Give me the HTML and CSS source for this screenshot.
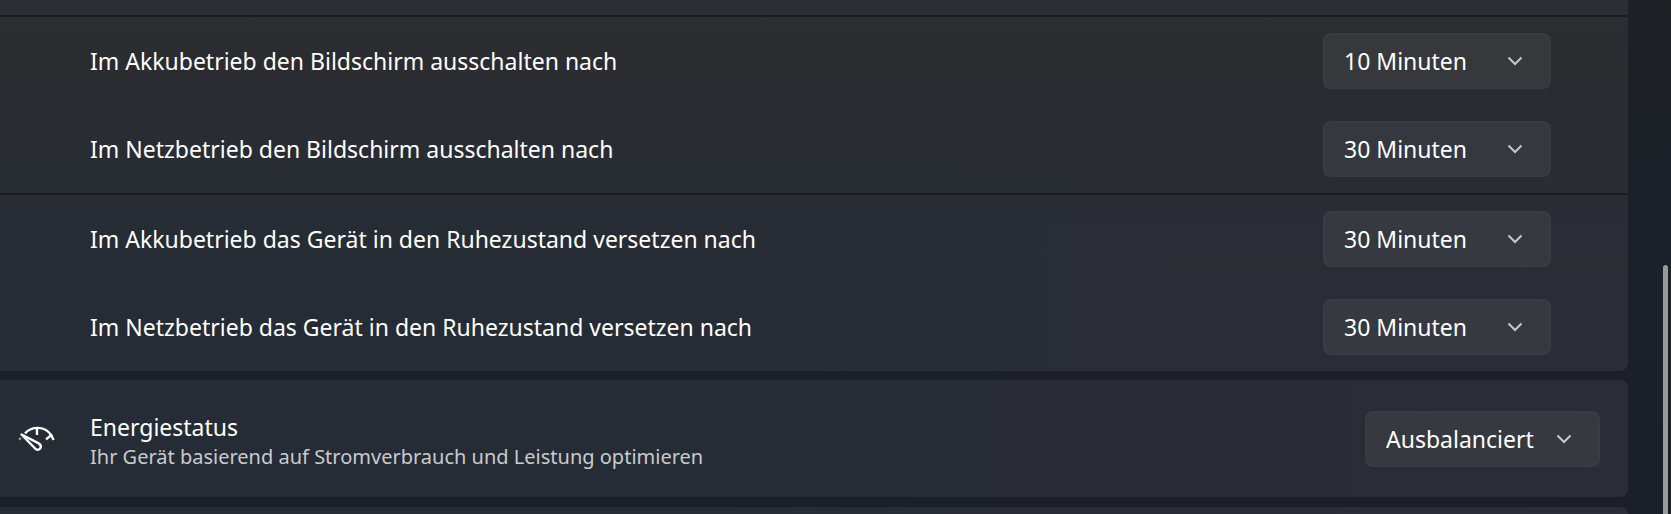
FILE: index.html
```html
<!DOCTYPE html>
<html lang="de">
<head>
    <meta charset="UTF-8">
    <meta name="viewport" content="width=device-width, initial-scale=1.0">
    <title>Netzbetrieb und Energiesparen</title>
    <link rel="stylesheet" href="styles.css">
</head>
<body>
    <main class="settings">
        <section class="card">
            <div class="card-header"></div>
            <div class="group">
                <div class="row">
                    <label for="screenBattery">Im Akkubetrieb den Bildschirm ausschalten nach</label>
                    <div class="dropdown">
                        <select id="screenBattery">
                            <option>10 Minuten</option>
                        </select>
                        <svg class="chevron" viewBox="0 0 16 10"><path d="M1.5 1.5 L8 8 L14.5 1.5"/></svg>
                    </div>
                </div>
                <div class="row">
                    <label for="screenPlugged">Im Netzbetrieb den Bildschirm ausschalten nach</label>
                    <div class="dropdown">
                        <select id="screenPlugged">
                            <option>30 Minuten</option>
                        </select>
                        <svg class="chevron" viewBox="0 0 16 10"><path d="M1.5 1.5 L8 8 L14.5 1.5"/></svg>
                    </div>
                </div>
            </div>
            <div class="group">
                <div class="row">
                    <label for="sleepBattery">Im Akkubetrieb das Gerät in den Ruhezustand versetzen nach</label>
                    <div class="dropdown">
                        <select id="sleepBattery">
                            <option>30 Minuten</option>
                        </select>
                        <svg class="chevron" viewBox="0 0 16 10"><path d="M1.5 1.5 L8 8 L14.5 1.5"/></svg>
                    </div>
                </div>
                <div class="row">
                    <label for="sleepPlugged">Im Netzbetrieb das Gerät in den Ruhezustand versetzen nach</label>
                    <div class="dropdown">
                        <select id="sleepPlugged">
                            <option>30 Minuten</option>
                        </select>
                        <svg class="chevron" viewBox="0 0 16 10"><path d="M1.5 1.5 L8 8 L14.5 1.5"/></svg>
                    </div>
                </div>
            </div>
        </section>

        <section class="card power-card">
            <svg class="gauge" viewBox="0 0 38 28">
                <path d="M7 8.3 C14 1 27 0.5 33.5 10.5 L35.6 15"/>
                <path d="M19 3.5 V10"/>
                <path d="M33.5 10 L28 14.4"/>
                <path d="M3.5 9.5 L20.8 18.4 C25 21 21.8 26.8 17.6 24 Z"/>
                <path class="tick" d="M1 13.2 L3 14.4"/>
            </svg>
            <div class="power-text">
                <label for="powerMode">Energiestatus</label>
                <p>Ihr Gerät basierend auf Stromverbrauch und Leistung optimieren</p>
            </div>
            <div class="dropdown dropdown-wide">
                <select id="powerMode">
                    <option>Ausbalanciert</option>
                </select>
                <svg class="chevron" viewBox="0 0 16 10"><path d="M1.5 1.5 L8 8 L14.5 1.5"/></svg>
            </div>
        </section>

        <section class="card next-card"></section>
    </main>
    <div class="scrollbar"></div>
</body>
</html>
```

FILE: styles.css
```css
* {
    box-sizing: border-box;
}

body {
    margin: 0;
    min-height: 100vh;
    display: flex;
    background: linear-gradient(#1e2124, #1c2028 30%, #1b2028);
    color: #fff;
    font-family: "Segoe UI", "Noto Sans", sans-serif;
    font-size: 23px;
}

.settings {
    flex: 1;
    display: flex;
    flex-direction: column;
    gap: 9px;
}

.card {
    border-radius: 0 8px 8px 0;
    background: linear-gradient(90deg, #252c35, #262c35 45%, #292c34 62%, #2a2d35);
}

.card:first-child {
    border-top-right-radius: 0;
    background: linear-gradient(#2b2d30, #2a2c30 20%, #292c33 40%, rgba(41, 44, 51, 0) 75%),
        linear-gradient(90deg, #252c35, #262c35 45%, #2a2d35 75%);
}

.card-header {
    height: 15px;
    background-color: #2b2e32;
}

.group {
    border-top: 2px solid #1c1e23;
}

.row {
    display: flex;
    align-items: center;
    justify-content: space-between;
    height: 88px;
    padding: 0 77px 0 90px;
}

/* select and chevron share one grid cell */
.dropdown {
    display: grid;
    grid-template-columns: 228px;
    align-items: center;
}

.dropdown-wide {
    grid-template-columns: 235px;
}

.dropdown select,
.chevron {
    grid-area: 1 / 1;
}

.dropdown select {
    appearance: none;
    width: 100%;
    height: 56px;
    padding: 0 56px 0 19px;
    border: 2px solid rgba(255, 255, 255, 0.02);
    border-radius: 8px;
    background-color: rgba(255, 255, 255, 0.06);
    color: #fff;
    font-family: inherit;
    font-size: 23px;
    cursor: pointer;
}

.dropdown select:hover {
    background-color: rgba(255, 255, 255, 0.09);
}

.dropdown option {
    background-color: #2b2d33;
}

.chevron {
    justify-self: end;
    width: 16px;
    height: 10px;
    margin-right: 28px;
    fill: none;
    stroke: #c8c9cb;
    stroke-width: 2;
    pointer-events: none;
}

.power-card {
    display: flex;
    align-items: center;
    height: 117px;
    padding: 0 28px 0 18px;
}

.gauge {
    width: 38px;
    height: 28px;
    margin-right: 34px;
    fill: none;
    stroke: #fff;
    stroke-width: 2.4;
    stroke-linejoin: round;
}

.gauge .tick {
    stroke: #9a9ea3;
}

.power-text {
    flex: 1;
    padding-top: 4px;
    line-height: 32px;
}

.power-text label {
    display: block;
}

.power-text p {
    margin: 0;
    color: #c9cbcd;
    font-size: 20px;
    line-height: 28px;
}

.next-card {
    flex: 1;
    margin-top: 1px;
    border-bottom-right-radius: 0;
}

.scrollbar {
    width: 5px;
    margin: 265px 3px 0 35px;
    border-radius: 3px 3px 0 0;
    background-color: #98999b;
}
```
